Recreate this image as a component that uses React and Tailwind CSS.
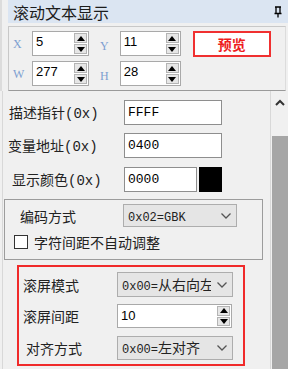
import React from "react";

const cjk = { fontFamily: '"Noto Sans CJK SC", "Noto Sans", sans-serif' };
const mono = { fontFamily: '"Liberation Mono", "Noto Sans CJK SC", monospace' };
const arial = { fontFamily: '"Liberation Sans", Arial, sans-serif' };

const Spin = ({ className = "" }) => (
  <div className={`flex flex-col w-[14px] h-full gap-[1px] py-[1px] pr-[1px] ${className}`}>
    <div className="flex-1 flex items-center justify-center bg-[#e6e6e6] border border-[#b4b4b4]">
      <div className="w-0 h-0 border-l-[4px] border-r-[4px] border-b-[5px] border-l-transparent border-r-transparent border-b-black" />
    </div>
    <div className="flex-1 flex items-center justify-center bg-[#e6e6e6] border border-[#b4b4b4]">
      <div className="w-0 h-0 border-l-[4px] border-r-[4px] border-t-[5px] border-l-transparent border-r-transparent border-t-black" />
    </div>
  </div>
);

const SpinBox = ({ value, w }) => (
  <div className={`flex h-[25px] bg-white border border-[#a9a9a9] ${w}`}>
    <div className="flex-1 pl-[3px] pt-[3px] text-[13px] leading-none text-black" style={arial}>
      {value}
    </div>
    <Spin />
  </div>
);

const Chevron = () => (
  <svg width="12" height="8" viewBox="0 0 12 8" className="shrink-0">
    <path d="M1.5 1.5 L6 6 L10.5 1.5" fill="none" stroke="#555" strokeWidth="1.3" />
  </svg>
);

const Select = ({ value, w, h = "h-[25px]" }) => (
  <div className={`flex items-center gap-[5px] ${h} ${w} bg-[#e5e5e5] border border-[#adadad] pl-[4px] pr-[4px] overflow-hidden`}>
    <div className="flex-1 whitespace-nowrap overflow-hidden text-[14px] leading-none text-[#222]" style={cjk}>
      {value}
    </div>
    <Chevron />
  </div>
);

const HexLabel = ({ text }) => (
  <div className="text-[14px] leading-none text-[#222] whitespace-nowrap" style={cjk}>
    {text}
    <span className="text-[14px]" style={mono}>(0x)</span>
  </div>
);

const HexInput = ({ value, w = "w-[98px]" }) => (
  <div className={`h-[25px] ${w} bg-white border border-[#8e8e8e] pl-[3px] flex items-center text-[13px] text-black`} style={mono}>
    {value}
  </div>
);

const XY = ({ c }) => (
  <span className="w-[10px] text-[12px] text-[#7d9fd0]" style={{ fontFamily: '"Liberation Serif", serif' }}>
    {c}
  </span>
);

export default function App() {
  return (
    <div className="w-[288px] h-[369px] overflow-hidden bg-[#f0f0f0] flex flex-col">
      {/* top: title + position */}
      <div className="flex h-[91px] shrink-0">
        <div className="w-[8px] border-l-[2px] border-[#dcdcdc]" />
        <div className="flex-1 flex flex-col">
          <div className="h-[23px] bg-[#dbe5f2] flex items-center pl-[5px] pr-[6px]">
            <span className="text-[16px] text-[#1c1c1c] leading-none" style={cjk}>滚动文本显示</span>
            <div className="ml-auto">
              <svg width="8" height="12" viewBox="0 0 8 12">
                <path d="M1 1 H7 M2 1 V7 M6 1 V7 M0.5 7.5 H7.5 M4 7.5 V11.5" stroke="#000" strokeWidth="1.3" fill="none" />
              </svg>
            </div>
          </div>
          <div className="flex-1 mt-[3px] mr-[2px] border border-[#c8c8c8] border-b-[#9a9a9a] border-r-[#dcdcdc] pt-[4px] pl-[4px] flex">
            <div className="flex flex-col gap-[5px]">
              <div className="flex items-center">
                <XY c="X" />
                <div className="ml-[9px]"><SpinBox value="5" w="w-[57px]" /></div>
                <span className="ml-[11px]"><XY c="Y" /></span>
                <div className="ml-[11px]"><SpinBox value="11" w="w-[61px]" /></div>
              </div>
              <div className="flex items-center">
                <XY c="W" />
                <div className="ml-[9px]"><SpinBox value="277" w="w-[57px]" /></div>
                <span className="ml-[11px]"><XY c="H" /></span>
                <div className="ml-[11px]"><SpinBox value="28" w="w-[61px]" /></div>
              </div>
            </div>
            <div className="ml-[12px] h-[26px] w-[78px] bg-white border-2 border-[#f03030] flex items-center justify-center">
              <span className="text-[14px] font-bold text-[#ee1c1c] leading-none" style={cjk}>预览</span>
            </div>
          </div>
        </div>
      </div>

      {/* bottom: scrolling properties */}
      <div className="flex flex-1 min-h-0">
        <div className="w-[3px] border-r border-[#d8d8d8]" />
        <div className="flex-1 flex flex-col pt-[9px]">
          <div className="flex items-center h-[25px]">
            <div className="w-[121px] pl-[6px]"><HexLabel text="描述指针" /></div>
            <HexInput value="FFFF" />
          </div>
          <div className="flex items-center h-[25px] mt-[8px]">
            <div className="w-[121px] pl-[5px]"><HexLabel text="变量地址" /></div>
            <HexInput value="0400" />
          </div>
          <div className="flex items-center h-[25px] mt-[9px]">
            <div className="w-[121px] pl-[9px]"><HexLabel text="显示颜色" /></div>
            <HexInput value="0000" w="w-[73px]" />
            <div className="ml-[2px] w-[23px] h-[25px] bg-black" />
          </div>

          <div className="mt-[7px] ml-[1px] w-[259px] h-[61px] border border-[#9c9c9c] flex flex-col pt-[4px]">
            <div className="flex items-center h-[23px]">
              <span className="w-[118px] pl-[15px] text-[14px] leading-none text-[#222]" style={cjk}>编码方式</span>
              <Select value={<span className="text-[12px]" style={mono}>0x02=GBK</span>} w="w-[114px]" h="h-[23px]" />
            </div>
            <div className="flex items-center mt-[8px] pl-[9px]">
              <div className="w-[14px] h-[14px] bg-white border border-[#333]" />
              <span className="ml-[6px] text-[14px] leading-none text-[#222]" style={cjk}>字符间距不自动调整</span>
            </div>
          </div>

          <div className="mt-[5px] ml-[14px] w-[228px] h-[101px] border-2 border-[#f02a2a] flex flex-col pt-[5px]">
            <div className="flex items-center h-[25px]">
              <span className="w-[98px] pl-[4px] text-[14px] leading-none text-[#222]" style={cjk}>滚屏模式</span>
              <Select value={<><span className="text-[12px]" style={mono}>0x00=</span>从右向左</>} w="w-[116px]" />
            </div>
            <div className="flex items-center h-[24px] mt-[7px]">
              <span className="w-[98px] pl-[4px] text-[14px] leading-none text-[#222]" style={cjk}>滚屏间距</span>
              <div className="flex h-[24px] w-[115px] bg-white border border-[#a9a9a9]">
                <div className="flex-1 pl-[3px] flex items-center text-[13px] text-black" style={arial}>10</div>
                <Spin />
              </div>
            </div>
            <div className="flex items-center h-[24px] mt-[8px]">
              <span className="w-[98px] pl-[7px] text-[14px] leading-none text-[#222]" style={cjk}>对齐方式</span>
              <Select value={<><span className="text-[12px]" style={mono}>0x00=</span>左对齐</>} w="w-[116px]" h="h-[24px]" />
            </div>
          </div>
        </div>

        {/* scrollbar */}
        <div className="w-[18px] border-l border-[#d8d8d8] flex flex-col">
          <div className="h-[45px] flex justify-center pt-[8px]">
            <svg width="10" height="7" viewBox="0 0 10 7">
              <path d="M1 6 L5 2 L9 6" fill="none" stroke="#333" strokeWidth="2" />
            </svg>
          </div>
          <div className="flex-1 ml-[1px] bg-[#a6a6a6]" />
        </div>
      </div>
    </div>
  );
}
